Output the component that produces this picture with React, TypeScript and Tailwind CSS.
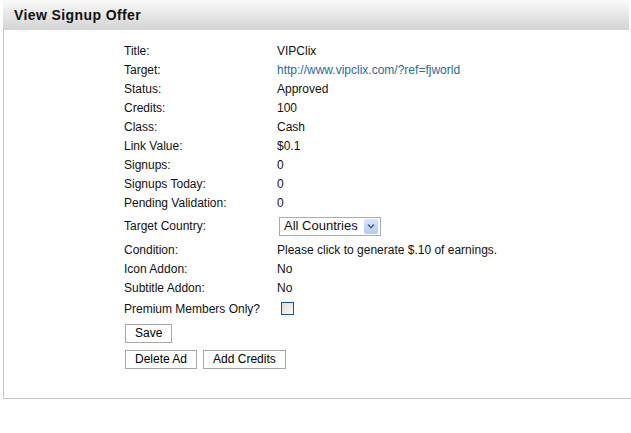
import React from "react";

const rows: { label: string; value: React.ReactNode }[] = [
  { label: "Title:", value: "VIPClix" },
  {
    label: "Target:",
    value: <span className="text-[#2a6aa3]">http://www.vipclix.com/?ref=fjworld</span>,
  },
  { label: "Status:", value: "Approved" },
  { label: "Credits:", value: "100" },
  { label: "Class:", value: "Cash" },
  { label: "Link Value:", value: "$0.1" },
  { label: "Signups:", value: "0" },
  { label: "Signups Today:", value: "0" },
  { label: "Pending Validation:", value: "0" },
];

const rows2 = [
  { label: "Condition:", value: "Please click to generate $.10 of earnings." },
  { label: "Icon Addon:", value: "No" },
  { label: "Subtitle Addon:", value: "No" },
];

const Btn = ({ children }: { children: React.ReactNode }) => (
  <button className="h-[19px] border border-[#a7a7a7] bg-white px-[9px] text-[12px] leading-[17px] text-black">
    {children}
  </button>
);

const Row = ({ label, children, h = "h-[19px]" }: { label: string; children: React.ReactNode; h?: string }) => (
  <div className={`flex items-center ${h}`}>
    <div className="w-[153px] shrink-0">{label}</div>
    <div>{children}</div>
  </div>
);

export default function App() {
  return (
    <div className="w-[631px] h-[433px] bg-white text-[12px] text-[#111] font-['Liberation_Sans',Arial,sans-serif]">
      <div className="ml-[3px] w-[626px] h-[30px] bg-gradient-to-b from-[#fafafa] to-[#d3d3d3] flex items-center pl-[11px]">
        <span className="text-[14px] font-bold tracking-[0.4px] text-[#111]">View Signup Offer</span>
      </div>
      <div className="ml-[3px] h-[369px] border-l border-b border-[#c4c4c4] pl-[120px] pt-[11px]">
        {rows.map((r) => (
          <Row key={r.label} label={r.label}>
            {r.value}
          </Row>
        ))}
        <Row label="Target Country:" h="h-[28px]">
          <div className="ml-[2px] flex h-[19px] w-[102px] items-center border border-[#a5acb2] bg-white pl-[4px] text-[13px]">
            <span className="flex-1">All Countries</span>
            <span className="mr-[2px] flex h-[15px] w-[14px] items-center justify-center rounded-[2px] bg-gradient-to-b from-[#d8e4fc] to-[#b4c9f4]">
              <svg width="8" height="6" viewBox="0 0 8 6">
                <path d="M1 1.5 L4 4.5 L7 1.5" stroke="#4d6185" strokeWidth="1.6" fill="none" />
              </svg>
            </span>
          </div>
        </Row>
        {rows2.map((r) => (
          <Row key={r.label} label={r.label}>
            {r.value}
          </Row>
        ))}
        <Row label="Premium Members Only?" h="h-[23px]">
          <div className="ml-[4px] h-[13px] w-[13px] border border-[#1c5180] bg-gradient-to-br from-[#dcdcd7] to-[#fbfbf9]" />
        </Row>
        <div className="mt-[4px] pl-[1px]">
          <Btn>Save</Btn>
        </div>
        <div className="mt-[7px] flex gap-[6px] pl-[1px]">
          <Btn>Delete Ad</Btn>
          <Btn>Add Credits</Btn>
        </div>
      </div>
    </div>
  );
}
